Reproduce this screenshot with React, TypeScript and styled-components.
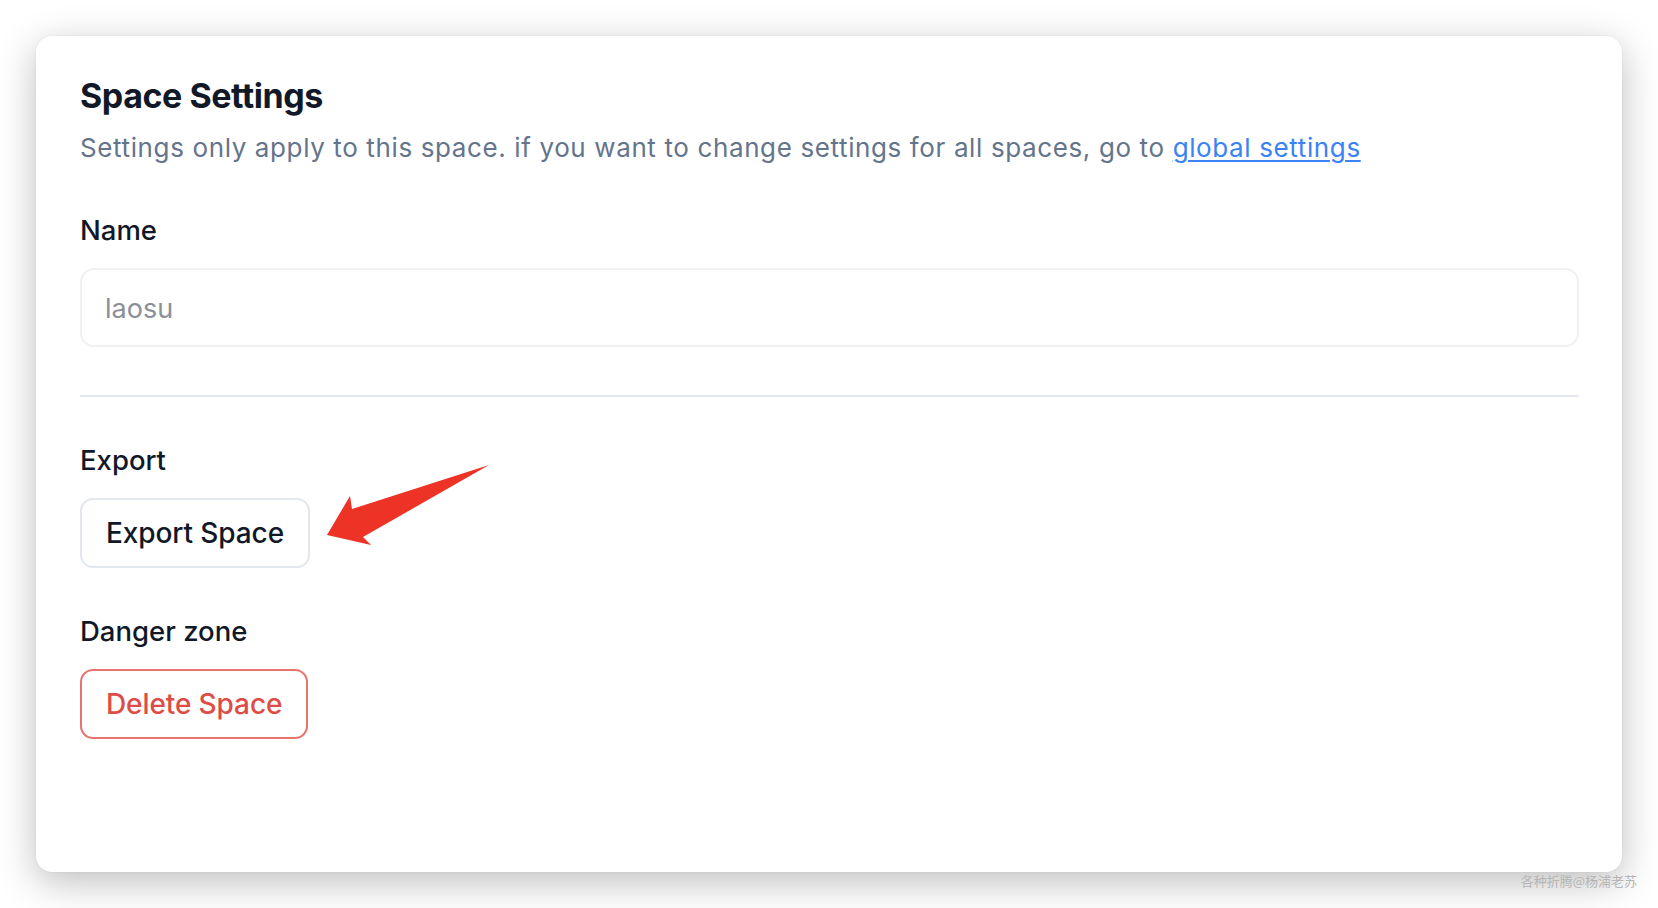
import React from "react";
import styled, { createGlobalStyle } from "styled-components";

const GlobalStyle = createGlobalStyle`
  html, body {
    margin: 0;
    padding: 0;
    background: #ffffff;
  }
  body {
    font-family: Inter, "Noto Sans", "Liberation Sans", sans-serif;
    -webkit-font-smoothing: antialiased;
  }
  * { box-sizing: border-box; }
`;

const Page = styled.div`
  position: relative;
  width: 1658px;
  height: 908px;
  padding: 36px;
  background: #ffffff;
`;

const Card = styled.div`
  height: 100%;
  background: #ffffff;
  border-radius: 16px;
  box-shadow: 0 10px 38px rgba(0, 0, 0, 0.26), 0 0 2px rgba(0, 0, 0, 0.08);
  padding: 38px 43px 0 44px;
  display: flex;
  flex-direction: column;
`;

const Title = styled.h1`
  margin: 0;
  font-size: 34px;
  line-height: 44px;
  font-weight: 700;
  letter-spacing: -0.45px;
  color: #111827;
`;

const Subtitle = styled.p`
  margin: 11.5px 0 0;
  font-size: 26px;
  line-height: 36px;
  font-weight: 400;
  letter-spacing: 0.62px;
  color: #64748b;
`;

const Link = styled.a`
  color: #3b82f6;
  text-decoration: underline;
  text-underline-offset: 3px;
  text-decoration-thickness: 2px;
`;

const Section = styled.section<{ $top: number }>`
  margin-top: ${(p) => p.$top}px;
  display: flex;
  flex-direction: column;
  align-items: flex-start;
  gap: 22px;
`;

const Label = styled.label`
  font-size: 27.5px;
  line-height: 32px;
  font-weight: 500;
  color: #111827;
`;

const Input = styled.input`
  width: 100%;
  height: 79px;
  border: 2px solid #eff1f5;
  border-radius: 14px;
  padding: 3px 23px 0;
  font-family: inherit;
  font-size: 27px;
  color: #8a8f98;
  background: #ffffff;
  outline: none;
  &::placeholder { color: #8a8f98; }
`;

const Divider = styled.hr`
  width: 100%;
  margin: 48px 0 0;
  border: none;
  height: 2px;
  background: #e6e8ef;
`;

const ButtonRow = styled.div`
  position: relative;
`;

const Button = styled.button<{ $danger?: boolean }>`
  height: 70px;
  padding: 0 24px;
  border-radius: 13px;
  border: 2px solid ${(p) => (p.$danger ? "#e9736e" : "#e3e7ee")};
  background: #ffffff;
  font-family: inherit;
  font-size: 28px;
  font-weight: 500;
  letter-spacing: -0.1px;
  color: ${(p) => (p.$danger ? "#dd4c46" : "#111827")};
  cursor: pointer;
`;

const Arrow = styled.svg`
  position: absolute;
  left: 244px;
  top: -36px;
  width: 168px;
  height: 86px;
  overflow: visible;
`;

const Watermark = styled.span`
  position: absolute;
  right: 21px;
  bottom: 18px;
  font-family: "Noto Sans CJK SC", sans-serif;
  font-size: 13px;
  line-height: 18px;
  color: #b5b5b5;
`;

export default function App() {
  return (
    <Page>
      <GlobalStyle />
      <Card>
        <Title>Space Settings</Title>
        <Subtitle>
          Settings only apply to this space. if you want to change settings for all spaces, go to{" "}
          <Link href="#">global settings</Link>
        </Subtitle>

        <Section $top={48}>
          <Label>Name</Label>
          <Input defaultValue="laosu" />
        </Section>

        <Divider />

        <Section $top={47}>
          <Label>Export</Label>
          <ButtonRow>
            <Button>Export Space</Button>
            <Arrow viewBox="0 0 168 86">
              <polygon points="3,73 26,34 28,47 165,3 39,75 47,83" fill="#ec3326" />
            </Arrow>
          </ButtonRow>
        </Section>

        <Section $top={47}>
          <Label>Danger zone</Label>
          <Button $danger>Delete Space</Button>
        </Section>
      </Card>
      <Watermark>各种折腾@杨浦老苏</Watermark>
    </Page>
  );
}
